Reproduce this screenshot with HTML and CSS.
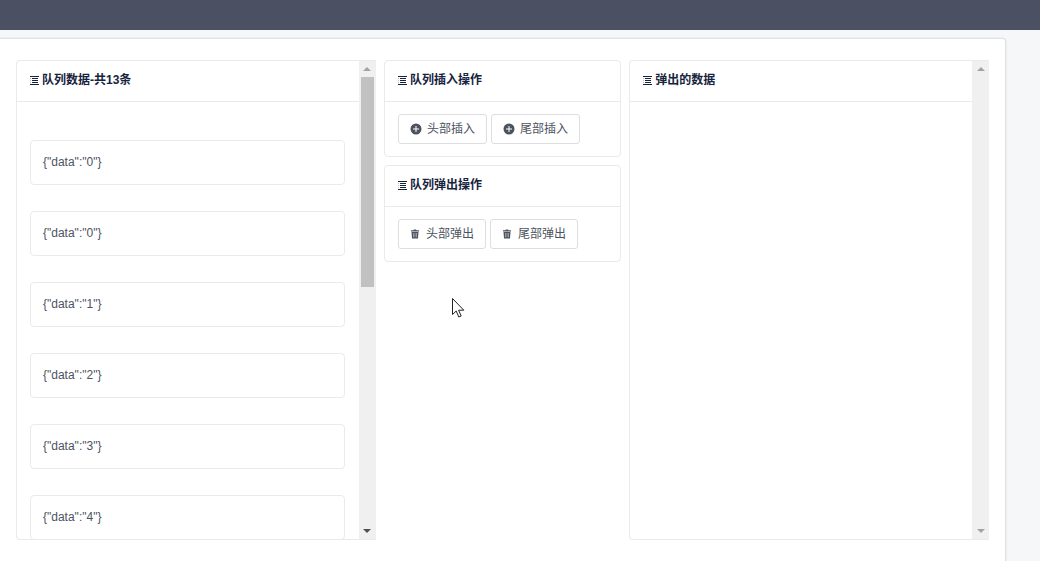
FILE: index.html
```html
<!DOCTYPE html>
<html lang="zh-CN">
<head>
    <meta charset="UTF-8">
    <meta name="viewport" content="width=device-width, initial-scale=1.0">
    <title>队列</title>
    <link rel="stylesheet" href="styles.css">
</head>
<body>
    <svg class="symbols" aria-hidden="true">
        <symbol id="icon-list" viewBox="0 0 9 9">
            <path d="M0 .5h9M2 2.5h6M2 4.5h6M2 6.5h6M0 8.5h9" stroke="currentColor" fill="none"/>
            <path d="M0 2.5h1M0 4.5h1M0 6.5h1" stroke="currentColor" stroke-opacity=".3" fill="none"/>
        </symbol>
        <symbol id="icon-add" viewBox="0 0 12 12">
            <path fill="currentColor" fill-rule="evenodd" d="M6 .5a5.5 5.5 0 1 0 0 11a5.5 5.5 0 0 0 0-11zM5.500 3h1v2.500H9v1H6.500V9h-1V6.500H3v-1h2.500z"/>
        </symbol>
        <symbol id="icon-trash" viewBox="0 0 10 10">
            <path fill="currentColor" d="M1 1.200h2.500L4 .5h2l.5.700H9V2.600H1z"/>
            <path fill="currentColor" fill-rule="evenodd" d="M1.500 2.900h7L8 9.500H2zM3.400 4l.2 4.300h.4L3.800 4zM4.800 4v4.300h.4V4zM6.200 4L6 8.300h.4L6.600 4z"/>
        </symbol>
    </svg>

    <header class="header"></header>

    <main class="content">
        <div class="row">
            <div class="col">
                <section class="card scroll-card">
                    <div class="card-main">
                        <h2 class="card-head"><svg class="icon-list"><use href="#icon-list"/></svg>队列数据-共13条</h2>
                        <ul class="queue">
                            <li>{"data":"0"}</li>
                            <li>{"data":"0"}</li>
                            <li>{"data":"1"}</li>
                            <li>{"data":"2"}</li>
                            <li>{"data":"3"}</li>
                            <li>{"data":"4"}</li>
                        </ul>
                    </div>
                    <div class="scrollbar" aria-hidden="true">
                        <span class="arrow up"></span>
                        <div class="track"><div class="thumb"></div></div>
                        <span class="arrow down dark"></span>
                    </div>
                </section>
            </div>

            <div class="col col-small">
                <section class="card">
                    <h2 class="card-head"><svg class="icon-list"><use href="#icon-list"/></svg>队列插入操作</h2>
                    <div class="card-body">
                        <button type="button" class="btn"><svg class="icon-add"><use href="#icon-add"/></svg>头部插入</button>
                        <button type="button" class="btn"><svg class="icon-add"><use href="#icon-add"/></svg>尾部插入</button>
                    </div>
                </section>
                <section class="card">
                    <h2 class="card-head"><svg class="icon-list"><use href="#icon-list"/></svg>队列弹出操作</h2>
                    <div class="card-body">
                        <button type="button" class="btn"><svg class="icon-trash"><use href="#icon-trash"/></svg>头部弹出</button>
                        <button type="button" class="btn"><svg class="icon-trash"><use href="#icon-trash"/></svg>尾部弹出</button>
                    </div>
                </section>
            </div>

            <div class="col">
                <section class="card scroll-card">
                    <div class="card-main">
                        <h2 class="card-head"><svg class="icon-list"><use href="#icon-list"/></svg>弹出的数据</h2>
                    </div>
                    <div class="scrollbar" aria-hidden="true">
                        <span class="arrow up"></span>
                        <div class="track"></div>
                        <span class="arrow down"></span>
                    </div>
                </section>
            </div>
        </div>
    </main>

    <svg class="cursor" viewBox="0 0 13 20" aria-hidden="true">
        <path d="M.5.500v16l3.700-3.500 2.600 6 2.400-1-2.600-5.800h5.200z" fill="#fff" stroke="#222"/>
    </svg>
</body>
</html>
```
FILE: styles.css
```css
* {
    box-sizing: border-box;
}

html, body {
    height: 100%;
}

body {
    margin: 0;
    display: flex;
    flex-direction: column;
    overflow: hidden;
    font-family: "Liberation Sans", "Noto Sans CJK SC", sans-serif;
    font-size: 12px;
    line-height: 18px;
    color: #4c535f;
    background: #f5f7f9;
}

.symbols {
    display: none;
}

.header {
    flex: none;
    height: 30px;
    background: #4b5062;
}

.content {
    flex: 1 0 auto;
    margin: 9px 35px 0 0;
    padding: 21px 16px 22px 16px;
    background: #fff;
    border-top-right-radius: 3px;
    box-shadow: 0 0 2px 1px rgba(0, 0, 0, 0.12);
}

/* 9 / 6 / 9 of a 24 column grid */
.row {
    display: flex;
    margin: 0 -4px;
}

.col {
    flex: 0 0 37.5%;
    padding: 0 4px;
}

.col-small {
    flex-basis: 25%;
}

.card {
    margin-bottom: 8px;
    background: #fff;
    border: 1px solid #e8eaec;
    border-radius: 4px;
}

.card-head {
    display: flex;
    align-items: center;
    gap: 3px;
    height: 41px;
    margin: 0;
    padding: 0 13px 2px;
    border-bottom: 1px solid #e8eaec;
    font-size: 12px;
    font-weight: bold;
    color: #17233d;
}

.card-body {
    display: flex;
    gap: 4px;
    padding: 12px 13px;
}

.scroll-card {
    display: flex;
    height: 480px;
    margin: 0;
    border-right: 0;
    overflow: hidden;
    border-radius: 4px 0 0 4px;
}

.card-main {
    flex: 1;
    overflow: hidden;
}

.queue {
    display: flex;
    flex-direction: column;
    gap: 26px;
    margin: 0;
    padding: 38px 14px 0 13px;
    list-style: none;
}

.queue li {
    padding: 12px 12px 13px;
    border: 1px solid #e8eaec;
    border-radius: 4px;
}

/* Scrollbar */
.scrollbar {
    display: flex;
    flex-direction: column;
    width: 17px;
    background: #f0f0f0;
}

.track {
    flex: 1;
    padding: 0 2px;
}

.thumb {
    height: 47%;
    background: #c1c1c1;
}

.arrow {
    display: flex;
    align-items: center;
    justify-content: center;
    height: 16px;
    color: #a3a3a3;
}

.arrow::before {
    content: "";
    border: 4px solid transparent;
}

.up::before {
    border-top: 0;
    border-bottom-color: currentColor;
}

.down::before {
    border-bottom: 0;
    border-top-color: currentColor;
}

.dark {
    color: #505050;
}

/* Buttons */
.btn {
    display: flex;
    align-items: center;
    height: 30px;
    padding: 0 11px;
    font: inherit;
    color: #4c535f;
    background: #fff;
    border: 1px solid #dcdee2;
    border-radius: 3px;
    cursor: pointer;
}

.btn:hover {
    color: #57a3f3;
    border-color: #57a3f3;
}

.icon-list {
    width: 9px;
    height: 9px;
}

.icon-add {
    width: 12px;
    height: 12px;
    margin-right: 5px;
}

.icon-trash {
    width: 10px;
    height: 10px;
    margin-right: 6px;
}

.cursor {
    position: absolute;
    left: 452px;
    top: 298px;
    width: 13px;
    height: 20px;
}
```
